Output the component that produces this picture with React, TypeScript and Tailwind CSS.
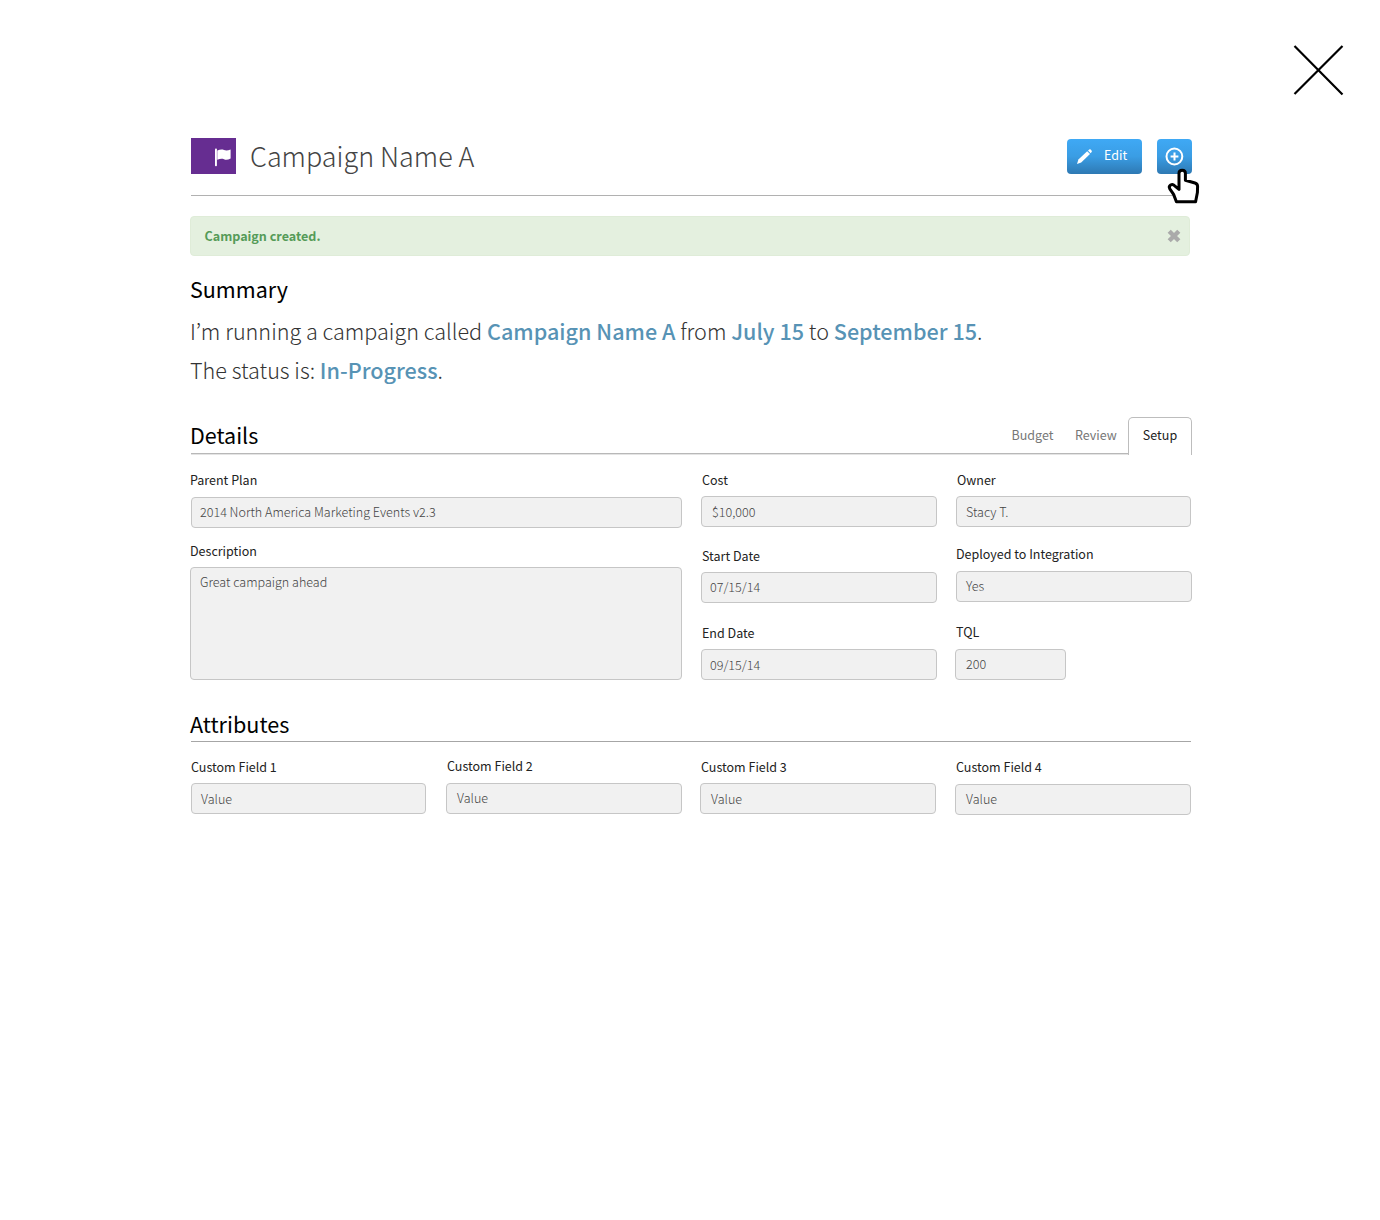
import type { ReactNode } from "react";

type FieldProps = {
  label: string;
  value: string;
  className?: string;
  labelClass?: string;
  boxClass?: string;
};

function Field({ label, value, className = "", labelClass = "", boxClass = "" }: FieldProps) {
  return (
    <div className={className}>
      <div className={`h-5 whitespace-nowrap text-[12.5px] leading-5 font-normal text-[#222] ${labelClass}`}>{label}</div>
      <div
        className={`rounded-[4px] border border-[#c6c6c6] bg-[#f1f1f1] text-[12.55px] leading-5 font-light whitespace-nowrap text-[#444] ${boxClass}`}
      >
        {value}
      </div>
    </div>
  );
}

function Strong({ children }: { children: ReactNode }) {
  return <span className="font-medium text-[#5793b5]">{children}</span>;
}

export default function App() {
  return (
    <div className="h-[1220px] w-[1380px] overflow-hidden bg-white font-['Noto_Sans_CJK_KR','Noto_Sans',sans-serif] text-black">
      <div className="flex h-[138px] justify-end pt-[44px] pr-[36px]">
        <svg width="52" height="52" viewBox="0 0 52 52" fill="none" stroke="#000" strokeWidth="2.2">
          <path d="M2.5 2 L50.5 50.5 M50.5 2 L2.5 50" />
        </svg>
      </div>

      <div className="ml-[190px] w-[1002px]">
        <header className="relative ml-px flex h-[58px] w-[1001px] items-start">
          <div className="h-9 w-[45px] bg-[#662d91]">
            <svg width="45" height="36" viewBox="0 0 45 36" fill="#fff">
              <rect x="24" y="10.5" width="1.9" height="17.7" rx="0.8" />
              <path d="M26.3 12.6 C29 11.4 31 11.2 33 12 C35 12.8 37 12.5 39.6 11.4 V20.5 C37 21.8 35 22.2 33 21.2 C31 20.4 29 20.6 26.3 21.8 Z" />
            </svg>
          </div>
          <h1 className="ml-[14px] text-[26.95px] leading-[36px] font-light text-[#444]">Campaign Name A</h1>
          <div className="mt-px ml-auto flex gap-[15px]">
            <button className="flex h-[35px] w-[75px] items-center rounded-[4px] bg-gradient-to-b from-[#3fa9f5] via-[#3a9de4] to-[#2e79b3] text-white">
              <svg className="ml-[9px]" width="17" height="17" viewBox="0 0 17 17" fill="#fff">
                <path d="M1 16 L2.4 11.6 L11.2 3.2 L14 6 L5.2 14.4 Z" />
                <path d="M12 2.5 L13.2 1.4 Q14 0.8 14.8 1.6 L15.5 2.4 Q16.3 3.2 15.6 4.1 L14.7 5.2 Z" />
              </svg>
              <span className="mb-[3px] ml-[11px] text-[12.5px] leading-5 font-normal">Edit</span>
            </button>
            <button className="flex h-[35px] w-[35px] items-center justify-center rounded-[4px] bg-gradient-to-b from-[#3fa9f5] via-[#3a9de4] to-[#2e79b3]">
              <svg width="21" height="21" viewBox="0 0 21 21" fill="none" stroke="#fff" strokeWidth="2">
                <circle cx="10.4" cy="10.5" r="7.9" />
                <path d="M10.5 6.6 V14.4 M6.6 10.5 H14.4" />
              </svg>
            </button>
          </div>
          <div className="absolute bottom-0 left-0 h-px w-[1000px] bg-[#b1b1b1]" />
          <svg className="absolute top-[28px] left-[974px]" width="36" height="40" viewBox="0 0 36 40" fill="#fff" stroke="#000" strokeWidth="3" strokeLinejoin="round">
            <path d="M14 23.4 V7.2 C14 3.2 20.4 3.2 20.4 7.2 V14.2 L30 17 Q32.6 17.8 32.6 20.4 L32.4 26.5 L30.6 35.8 H11.4 L8.6 28.4 L4.8 22.8 C3 19.6 7.2 17.2 9.4 19.6 Z" />
          </svg>
        </header>

        <div className="mt-[20px] flex h-10 w-[1000px] items-center justify-between rounded-[4px] border border-[#dfecd8] bg-[#e4f0df] pr-[8px] pl-[13.5px]">
          <span className="text-[12.55px] leading-5 font-bold text-[#559b58]">Campaign created.</span>
          <svg width="14" height="14" viewBox="0 0 14 14" fill="none" stroke="#aaa" strokeWidth="4.4">
            <path d="M2.2 2.2 L11.8 11.8 M11.8 2.2 L2.2 11.8" />
          </svg>
        </div>

        <section className="pt-[17px]">
          <h2 className="h-[32px] text-[21.5px] leading-[32px] font-normal">Summary</h2>
          <p className="mt-[6px] text-[21.58px] leading-[39px] font-light text-[#333]">
            I’m running a campaign called <Strong>Campaign Name A</Strong> from <Strong>July 15</Strong> to{" "}
            <Strong>September 15</Strong>.
            <br />
            The status is: <Strong>In-Progress</Strong>.
          </p>
        </section>

        <section className="mt-[28px]">
          <div className="relative flex h-[38px] text-[12.5px]">
            <div className="absolute top-[36px] left-px h-px w-[938px] bg-[#b8b8b8]" />
            <div className="absolute top-[37px] left-px h-px w-[938px] bg-[#e4e4e4]" />
            <h2 className="mt-[2px] text-[21.5px] leading-[32px] font-normal">Details</h2>
            <nav className="ml-auto flex leading-[36px] font-normal text-[#777]">
              <span className="w-[63.5px]">Budget</span>
              <span className="w-[53px]">Review</span>
              <span className="z-10 h-[38px] w-[64px] rounded-t-[5px] border border-b-0 border-[#bdbdbd] bg-white text-center leading-[34px] font-normal text-[#222]">
                Setup
              </span>
            </nav>
          </div>

          <div className="mt-[15px] flex">
            <div className="w-[492px]">
              <Field label="Parent Plan" value="2014 North America Marketing Events v2.3" boxClass="ml-px mt-[7px] h-[31px] pt-[4px] pl-[8px]" />
              <Field className="mt-[13px]" label="Description" value="Great campaign ahead" boxClass="mt-[6px] h-[113px] pt-[4px] pl-[9px]" />
            </div>
            <div className="ml-[19px] w-[236px]">
              <Field label="Cost" value="$10,000" labelClass="pl-px" boxClass="mt-[6px] h-[31px] pt-[5px] pl-[10px]" />
              <Field className="mt-[19px]" label="Start Date" value="07/15/14" labelClass="pl-px" boxClass="mt-[6px] h-[31px] pt-[4px] pl-[8px]" />
              <Field className="mt-[20px]" label="End Date" value="09/15/14" labelClass="pl-px" boxClass="mt-[6px] h-[31px] pt-[5px] pl-[8px]" />
            </div>
            <div className="ml-[18px] w-[237px]">
              <Field label="Owner" value="Stacy T." labelClass="pl-[2px]" boxClass="ml-px mr-px mt-[6px] h-[31px] pt-[5px] pl-[9px]" />
              <Field className="mt-[17px]" label="Deployed to Integration" value="Yes" labelClass="pl-px" boxClass="ml-px mt-[7px] h-[31px] pt-[4px] pl-[9px]" />
              <Field className="mt-[20px]" label="TQL" value="200" labelClass="pl-px" boxClass="mt-[7px] h-[31px] w-[111px] pt-[4px] pl-[10px]" />
            </div>
          </div>
        </section>

        <section className="pt-[28px]">
          <h2 className="h-[33px] text-[21.6px] leading-[32px] font-normal">Attributes</h2>
          <div className="ml-px h-px w-[1000px] bg-[#a6a6a6]" />
          <div className="mt-[15px] ml-px flex items-start">
            <Field className="w-[235px]" label="Custom Field 1" value="Value" boxClass="mt-[6px] h-[31px] pt-[5px] pl-[9px]" />
            <Field className="-mt-px ml-[20px] w-[236px]" label="Custom Field 2" value="Value" labelClass="pl-px" boxClass="mt-[7px] h-[31px] pt-[4px] pl-[10px]" />
            <Field className="ml-[18px] w-[236px]" label="Custom Field 3" value="Value" labelClass="pl-px" boxClass="mt-[6px] h-[31px] pt-[5px] pl-[10px]" />
            <Field className="ml-[19px] w-[236px]" label="Custom Field 4" value="Value" labelClass="pl-px" boxClass="mt-[7px] h-[31px] pt-[4px] pl-[10px]" />
          </div>
        </section>
      </div>
    </div>
  );
}
